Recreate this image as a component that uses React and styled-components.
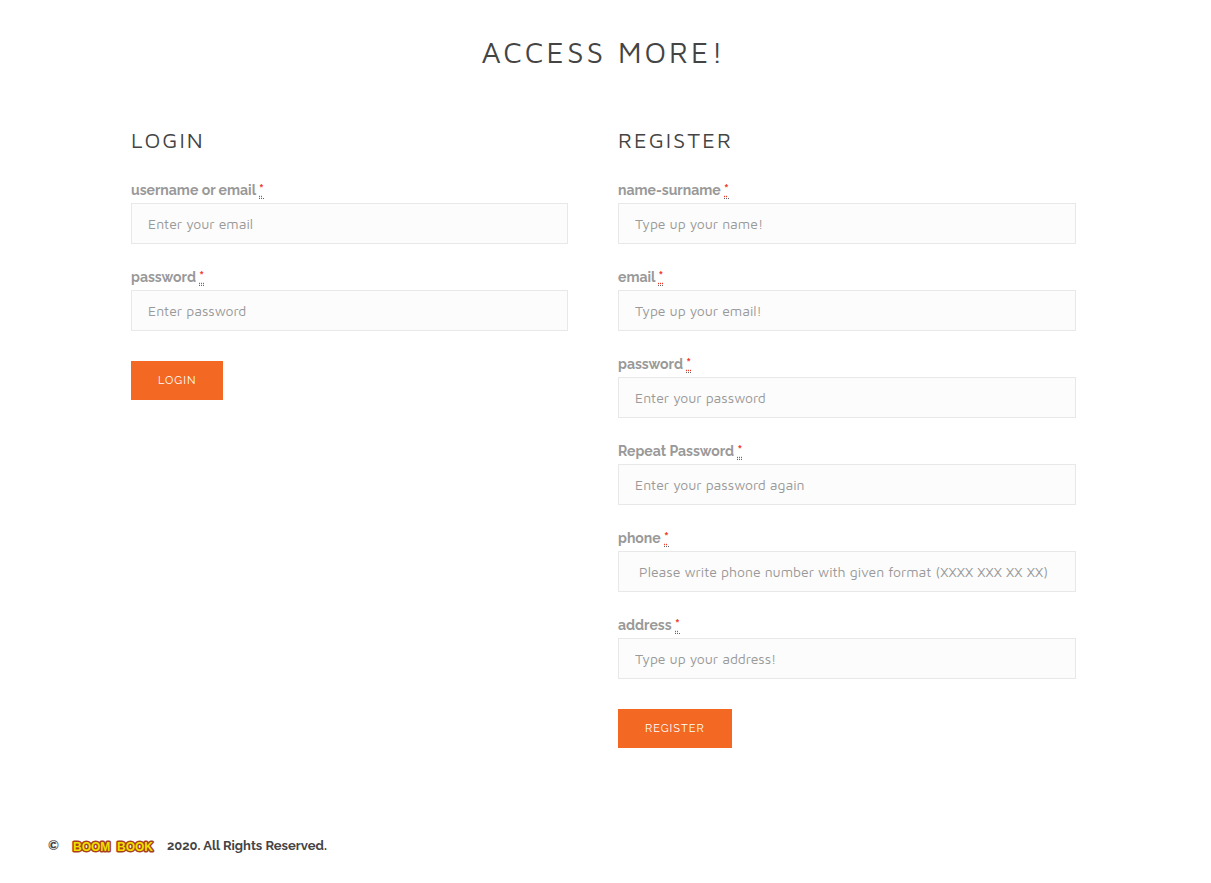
import React from "react";
import styled, { createGlobalStyle } from "styled-components";

const GlobalStyle = createGlobalStyle`
  *, *::before, *::after { box-sizing: border-box; }
  body {
    margin: 0;
    background: #fff;
    color: #444;
    font-family: Raleway, Lato, "Open Sans", sans-serif;
    font-size: 14px;
    line-height: 24px;
  }
`;

const headingFont = `"Maven Pro", "Noto Sans", "Open Sans", sans-serif`;

const Main = styled.main`
  padding: 32px 135px 0 131px;
`;

const Title = styled.h1`
  margin: 0 0 56px;
  font: 300 30px/40px ${headingFont};
  letter-spacing: 3px;
  text-align: center;
  text-transform: uppercase;
`;

const Columns = styled.div`
  display: grid;
  grid-template-columns: 437fr 458fr;
  gap: 50px;
  align-items: start;
`;

const Form = styled.form`
  display: flex;
  flex-direction: column;
  align-items: stretch;
`;

const FormTitle = styled.h2`
  margin: 0 0 26px;
  font: 300 22px/24px ${headingFont};
  letter-spacing: 2px;
  text-transform: uppercase;
`;

const Field = styled.div`
  display: flex;
  flex-direction: column;
  margin-bottom: 21px;
`;

const Label = styled.label`
  height: 25px;
  line-height: 24px;
  font-weight: 700;
  color: #999;
`;

const Required = styled.abbr`
  border-bottom: 1px dotted #666;
  color: #f0392b;
  font: 700 14px/14px Raleway, Lato, sans-serif;
  text-decoration: underline dotted;
`;

const Input = styled.input`
  width: 100%;
  height: 41px;
  padding: 0 16px;
  border: 1px solid #e8e8e8;
  border-radius: 0;
  background: #fcfcfc;
  color: #666;
  font: 400 14px/20px ${headingFont};

  &::placeholder {
    color: #999;
    opacity: 1;
  }
`;

const Button = styled.button`
  align-self: flex-start;
  height: 39px;
  margin-top: 9px;
  padding: 0 27px;
  border: 0;
  background: #f36822;
  color: #fff;
  font: 400 11px/39px Raleway, Lato, sans-serif;
  letter-spacing: 1px;
  text-transform: uppercase;
  cursor: pointer;
`;

const Footer = styled.footer`
  display: flex;
  align-items: center;
  gap: 12px;
  margin-top: 86px;
  padding: 0 48px 25px;
  font-size: 13px;
  font-weight: 700;
`;

const Logo = styled.svg`
  display: block;
  width: 84px;
  height: 16px;
`;

const LogoText = styled.text`
  font: 700 12px "Liberation Sans", Arial, sans-serif;
  fill: #f0e000;
  stroke: #a8401c;
  stroke-width: 3px;
  stroke-linejoin: round;
  paint-order: stroke;
`;

const loginFields = [
  { id: "login-email", label: "username or email", placeholder: "Enter your email" },
  { id: "login-password", label: "password", placeholder: "Enter password", type: "password" },
];

const registerFields = [
  { id: "name", label: "name-surname", placeholder: "Type up your name!" },
  { id: "email", label: "email", placeholder: "Type up your email!", type: "email" },
  { id: "new-password", label: "password", placeholder: "Enter your password", type: "password" },
  { id: "repeat-password", label: "Repeat Password", placeholder: "Enter your password again", type: "password" },
  { id: "phone", label: "phone", placeholder: " Please write phone number with given format (XXXX XXX XX XX)", type: "tel" },
  { id: "address", label: "address", placeholder: "Type up your address!" },
];

function AccessForm({ title, fields }) {
  return (
    <Form onSubmit={(event) => event.preventDefault()}>
      <FormTitle>{title}</FormTitle>
      {fields.map(({ id, label, type = "text", placeholder }) => (
        <Field key={id}>
          <Label htmlFor={id}>
            {label} <Required title="required">*</Required>
          </Label>
          <Input id={id} name={id} type={type} placeholder={placeholder} />
        </Field>
      ))}
      <Button type="submit">{title}</Button>
    </Form>
  );
}

export default function App() {
  return (
    <>
      <GlobalStyle />
      <Main>
        <Title>Access more!</Title>
        <Columns>
          <AccessForm title="Login" fields={loginFields} />
          <AccessForm title="Register" fields={registerFields} />
        </Columns>
      </Main>
      <Footer>
        <span>©</span>
        <Logo viewBox="0 0 84 16" role="img" aria-label="Boom Book">
          <LogoText x="2" y="13">BOOM</LogoText>
          <LogoText x="46" y="13">BOOK</LogoText>
        </Logo>
        <span>2020. All Rights Reserved.</span>
      </Footer>
    </>
  );
}
